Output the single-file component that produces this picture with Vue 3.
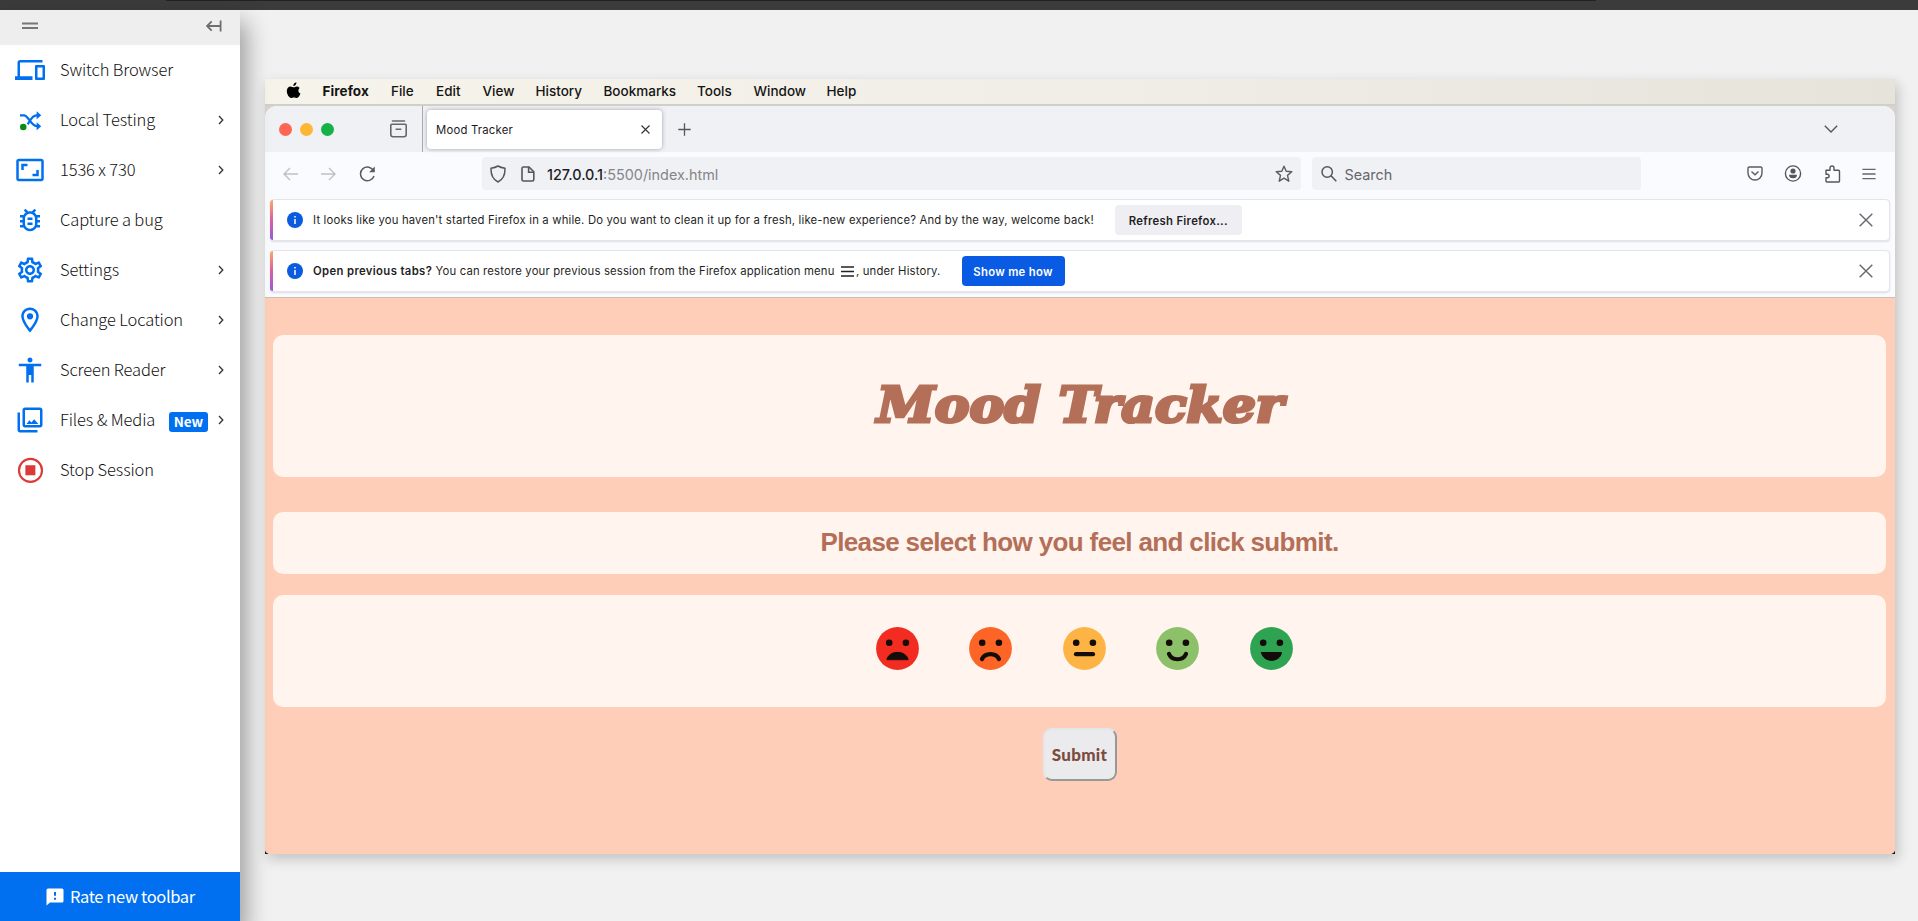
<script setup>
const tools = [
  { label: 'Switch Browser', icon: 'devices', arrow: false },
  { label: 'Local Testing', icon: 'shuffle', arrow: true },
  { label: '1536 x 730', icon: 'ratio', arrow: true },
  { label: 'Capture a bug', icon: 'bug', arrow: false },
  { label: 'Settings', icon: 'gear', arrow: true },
  { label: 'Change Location', icon: 'pin', arrow: true },
  { label: 'Screen Reader', icon: 'person', arrow: true },
  { label: 'Files & Media', icon: 'media', arrow: true, badge: 'New' },
  { label: 'Stop Session', icon: 'stop', arrow: false },
]

const paths = {
  devices: 'M4 6h18V4H4c-1.1 0-2 .9-2 2v11H0v3h14v-3H4V6zm19 2h-6c-.55 0-1 .45-1 1v10c0 .55.45 1 1 1h6c.55 0 1-.45 1-1V9c0-.55-.45-1-1-1zm-1 10h-4v-8h4v8z',
  ratio: 'M19 12h-2v3h-3v2h5v-5zM7 9h3V7H5v5h2V9zm14-6H3c-1.1 0-2 .9-2 2v14c0 1.1.9 2 2 2h18c1.1 0 2-.9 2-2V5c0-1.1-.9-2-2-2zm0 16.01H3V4.99h18v14.02z',
  bug: 'M20 8h-2.81c-.45-.78-1.07-1.45-1.82-1.96L17 4.41 15.59 3l-2.17 2.17C12.96 5.06 12.49 5 12 5s-.96.06-1.41.17L8.41 3 7 4.41l1.62 1.63C7.88 6.55 7.26 7.22 6.81 8H4v2h2.09c-.05.33-.09.66-.09 1v1H4v2h2v1c0 .34.04.67.09 1H4v2h2.81c1.04 1.79 2.97 3 5.19 3s4.15-1.21 5.19-3H20v-2h-2.09c.05-.33.09-.66.09-1v-1h2v-2h-2v-1c0-.34-.04-.67-.09-1H20V8zm-4 4v3c0 2.21-1.79 4-4 4s-4-1.79-4-4v-4c0-2.21 1.79-4 4-4s4 1.79 4 4v1zm-6 2h4v2h-4zm0-4h4v2h-4z',
  gear: 'M19.43 12.98c.04-.32.07-.64.07-.98s-.03-.66-.07-.98l2.11-1.65c.19-.15.24-.42.12-.64l-2-3.46c-.09-.16-.26-.25-.44-.25-.06 0-.12.01-.17.03l-2.49 1c-.52-.4-1.08-.73-1.69-.98l-.38-2.65C14.46 2.18 14.25 2 14 2h-4c-.25 0-.46.18-.49.42l-.38 2.65c-.61.25-1.17.59-1.69.98l-2.49-1c-.06-.02-.12-.03-.18-.03-.17 0-.34.09-.43.25l-2 3.46c-.13.22-.07.49.12.64l2.11 1.65c-.04.32-.07.65-.07.98s.03.66.07.98l-2.11 1.65c-.19.15-.24.42-.12.64l2 3.46c.09.16.26.25.44.25.06 0 .12-.01.17-.03l2.49-1c.52.4 1.08.73 1.69.98l.38 2.65c.03.24.24.42.49.42h4c.25 0 .46-.18.49-.42l.38-2.65c.61-.25 1.17-.59 1.69-.98l2.49 1c.06.02.12.03.18.03.17 0 .34-.09.43-.25l2-3.46c.12-.22.07-.49-.12-.64l-2.11-1.65zm-1.98-1.71c.04.31.05.52.05.73 0 .21-.02.43-.05.73l-.14 1.13.89.7 1.08.84-.7 1.21-1.27-.51-1.04-.42-.9.68c-.43.32-.84.56-1.25.73l-1.06.43-.16 1.13-.2 1.35h-1.4l-.19-1.35-.16-1.13-1.06-.43c-.43-.18-.83-.41-1.23-.71l-.91-.7-1.06.43-1.27.51-.7-1.21 1.08-.84.89-.7-.14-1.13c-.03-.31-.05-.54-.05-.74s.02-.43.05-.73l.14-1.13-.89-.7-1.08-.84.7-1.21 1.27.51 1.04.42.9-.68c.43-.32.84-.56 1.25-.73l1.06-.43.16-1.13.2-1.35h1.39l.19 1.35.16 1.13 1.06.43c.43.18.83.41 1.23.71l.91.7 1.06-.43 1.27-.51.7 1.21-1.07.85-.89.7.14 1.13zM12 8c-2.21 0-4 1.79-4 4s1.79 4 4 4 4-1.79 4-4-1.79-4-4-4zm0 6c-1.1 0-2-.9-2-2s.9-2 2-2 2 .9 2 2-.9 2-2 2z',
  pin: 'M12 2C8.13 2 5 5.13 5 9c0 5.25 7 13 7 13s7-7.75 7-13c0-3.87-3.13-7-7-7zM7 9c0-2.76 2.24-5 5-5s5 2.24 5 5c0 2.88-2.88 7.19-5 9.88C9.92 16.21 7 11.85 7 9zM12 6.5a2.5 2.5 0 1 0 0 5a2.5 2.5 0 1 0 0-5z',
  person: 'M12 2c1.1 0 2 .9 2 2s-.9 2-2 2-2-.9-2-2 .9-2 2-2zm9 7h-6v13h-2v-6h-2v6H9V9H3V7h18v2z',
  media: 'M20 4v12H8V4h12m0-2H8c-1.1 0-2 .9-2 2v12c0 1.1.9 2 2 2h12c1.1 0 2-.9 2-2V4c0-1.1-.9-2-2-2zm-8.5 10.2l1.6 1.8 2.2-2.6 3.4 3.7H9.2zM2 6v14c0 1.1.9 2 2 2h14v-2H4V6H2z',
}

const menus = ['Firefox', 'File', 'Edit', 'View', 'History', 'Bookmarks', 'Tools', 'Window', 'Help']

const moods = [
  { color: '#f22c20', mouth: 'M11 32.3C13 23 30 23 32 32.3Z', fill: true },
  { color: '#fd6526', mouth: 'M13 32C16 25.5 27 25.5 30 32', fill: false },
  { color: '#fdb445', mouth: 'M13 27.2H30', fill: false },
  { color: '#8cc069', mouth: 'M13 27C16 34 27 34 30 27', fill: false },
  { color: '#2ea351', mouth: 'M11.5 25.5H31.5C30 36 13 36 11.5 25.5Z', fill: true },
]
</script>

<template>
  <div class="screen">
    <div class="topbar"><div class="topline"></div></div>
    <div class="main">
      <aside class="sidebar">
        <header class="side-head">
          <svg width="16" height="8" viewBox="0 0 16 8"><path d="M0 1.5H16M0 6H16" stroke="#777" stroke-width="1.9" /></svg>
          <svg width="16" height="12" viewBox="0 0 16 12"><path d="M14.6 .5V11.5M14 6H1.5M5.7 1.3L1 6L5.7 10.7" fill="none" stroke="#6e6e6e" stroke-width="1.8" /></svg>
        </header>
        <nav class="tools">
          <div v-for="t in tools" :key="t.label" class="tool">
            <svg class="tool-icon" width="30" height="30" viewBox="0 0 24 24">
              <g v-if="t.icon === 'shuffle'">
                <path d="M4 8.2H7.2C10.5 8.2 13 16.9 17.2 16.9H18.5M10.2 15.5C12.2 12.2 13.6 8.2 17.2 8.2H18.5" fill="none" stroke="#0070f0" stroke-width="1.8" />
                <path d="M17.3 5L21 8.2L17.3 11.4ZM17.3 13.7L21 16.9L17.3 20.1Z" fill="#0070f0" />
                <circle cx="6.6" cy="17.5" r="2.6" fill="#0a8a14" />
              </g>
              <g v-else-if="t.icon === 'stop'">
                <circle cx="12.4" cy="12.3" r="9.2" fill="none" stroke="#dc3939" stroke-width="1.7" />
                <rect x="8.3" y="8.2" width="8" height="8" fill="#dc3939" />
              </g>
              <path v-else :d="paths[t.icon]" fill="#0070f0" />
            </svg>
            <span class="tool-label">{{ t.label }}</span>
            <span v-if="t.badge" class="badge">{{ t.badge }}</span>
            <svg v-if="t.arrow" class="tool-arrow" width="6" height="10" viewBox="0 0 6 10"><path d="M1 1L4.8 5L1 9" fill="none" stroke="#333" stroke-width="1.3" /></svg>
          </div>
        </nav>
        <footer class="rate">
          <svg width="18" height="18" viewBox="0 0 18 18"><path d="M2 .5H16Q17.5 .5 17.5 2V13Q17.5 14.5 16 14.5H4L.5 17.5V2Q.5 .5 2 .5Z" fill="#fff" /><path d="M9 4V7.8M9 9.7V11.7" stroke="#0070f0" stroke-width="2" /></svg>
          <span>Rate new toolbar</span>
        </footer>
      </aside>

      <main class="stage">
        <section class="vm">
          <div class="menubar">
            <svg class="apple" width="15" height="17" viewBox="0 0 15 17"><path d="M10.4 .2C10.6 2.2 9 4 7.3 4C7.1 2.1 8.7 .5 10.4 .2ZM13.7 6C12 7.1 11.8 10.3 14.4 11.5C13.8 13.2 12.4 16 10.8 16C9.7 16 9.3 15.4 8 15.4C6.7 15.4 6.2 16 5.2 16C3 16 .8 12 .8 9C.8 6.2 2.5 4.4 4.6 4.4C5.8 4.4 6.9 5.2 7.7 5.2C8.5 5.2 9.6 4.3 11.1 4.4C12 4.4 13.1 4.9 13.7 6Z" fill="#000" /></svg>
            <span v-for="m in menus" :key="m" class="menu" :class="{ strong: m === 'Firefox' }">{{ m }}</span>
          </div>
          <div class="window">
            <div class="tabstrip">
              <div class="lights"><i class="red"></i><i class="amber"></i><i class="green"></i></div>
              <svg class="archive" width="17" height="18" viewBox="0 0 17 18"><path d="M2.5 1H14.5M1.8 4.3H15.2Q16.2 4.3 16.2 5.3V14.5Q16.2 16.7 14 16.7H3Q.8 16.7 .8 14.5V5.3Q.8 4.3 1.8 4.3ZM6.2 9.3H10.8" fill="none" stroke="#66666e" stroke-width="1.6" stroke-linecap="round" /></svg>
              <div class="divider"></div>
              <div class="tab">
                <span>Mood Tracker</span>
                <svg width="9" height="9" viewBox="0 0 9 9"><path d="M.5 .5L8.5 8.5M8.5 .5L.5 8.5" stroke="#333" stroke-width="1.1" /></svg>
              </div>
              <svg class="plus" width="13" height="13" viewBox="0 0 13 13"><path d="M6.5 .3V12.7M.3 6.5H12.7" stroke="#55555c" stroke-width="1.3" /></svg>
              <svg class="tabs-more" width="14" height="8" viewBox="0 0 14 8"><path d="M.8 .8L7 7L13.2 .8" fill="none" stroke="#55555c" stroke-width="1.4" /></svg>
            </div>
            <div class="navbar">
              <div class="navbuttons">
                <svg width="15" height="14" viewBox="0 0 15 14"><path d="M15 7H1M7 1L1 7L7 13" fill="none" stroke="#bfbfc4" stroke-width="1.4" /></svg>
                <svg width="15" height="14" viewBox="0 0 15 14"><path d="M0 7H14M8 1L14 7L8 13" fill="none" stroke="#bfbfc4" stroke-width="1.4" /></svg>
                <svg width="17" height="16" viewBox="0 0 17 16"><path d="M14.7 5A6.9 6.9 0 1 0 15 10" fill="none" stroke="#5b5b62" stroke-width="1.5" /><path d="M15.8 .6V6.3H10.1Z" fill="#5b5b62" /></svg>
              </div>
              <div class="urlbar">
                <svg width="16" height="18" viewBox="0 0 16 18"><path d="M8 1C10 2.3 12.4 2.9 15 3.2C15.2 9.6 13 14.6 8 17C3 14.6 .8 9.6 1 3.2C3.6 2.9 6 2.3 8 1Z" fill="none" stroke="#55555c" stroke-width="1.5" stroke-linejoin="round" /></svg>
                <svg class="doc" width="14" height="16" viewBox="0 0 14 16"><path d="M2.5 1H8L12.8 5.8V13.5Q12.8 15 11.3 15H2.5Q1 15 1 13.5V2.5Q1 1 2.5 1Z" fill="none" stroke="#55555c" stroke-width="1.6" /><path d="M7.6 1V6.3H13" fill="none" stroke="#55555c" stroke-width="1.6" /></svg>
                <span class="url"><b>127.0.0.1</b>:5500/index.html</span>
                <svg class="star" width="18" height="18" viewBox="0 0 18 18"><path d="M9 1.2L11.2 6.3L16.8 6.8L12.5 10.4L13.8 16.2L9 13.1L4.2 16.2L5.5 10.4L1.2 6.8L6.8 6.3Z" fill="none" stroke="#5b5b62" stroke-width="1.4" stroke-linejoin="round" /></svg>
              </div>
              <div class="searchbar">
                <svg width="16" height="16" viewBox="0 0 16 16"><circle cx="6.2" cy="6" r="5.2" fill="none" stroke="#55555c" stroke-width="1.5" /><path d="M10 9.8L15.3 15.2" stroke="#55555c" stroke-width="1.6" /></svg>
                <span>Search</span>
              </div>
              <div class="actions">
                <svg width="16" height="15" viewBox="0 0 16 15"><path d="M2.3 1H13.7Q15 1 15 2.3V7A7 7 0 0 1 1 7V2.3Q1 1 2.3 1ZM4.5 5.5L8 8.8L11.5 5.5" fill="none" stroke="#5b5b62" stroke-width="1.4" /></svg>
                <svg width="18" height="17" viewBox="0 0 18 17"><circle cx="9" cy="8.5" r="7.6" fill="none" stroke="#55555c" stroke-width="1.4" /><circle cx="9" cy="6" r="2.6" fill="#55555c" /><path d="M5 9.8H13Q13 13.3 9 13.3Q5 13.3 5 9.8Z" fill="#55555c" /></svg>
                <svg width="17" height="18" viewBox="0 0 17 18"><path d="M2 5.2H6V3A2 2 0 0 1 10 3V5.2H14.5Q15.5 5.2 15.5 6.2V16Q15.5 17 14.5 17H3Q2 17 2 16V12.8H3.3A1.8 1.8 0 0 0 3.3 9.2H2Z" fill="none" stroke="#55555c" stroke-width="1.4" stroke-linejoin="round" /></svg>
                <svg width="14" height="12" viewBox="0 0 14 12"><path d="M.4 1.3H13.6M.4 6H13.6M.4 10.7H13.6" stroke="#66666d" stroke-width="1.3" /></svg>
              </div>
            </div>
            <div class="notices">
              <div class="notice">
                <svg class="info" width="16" height="16" viewBox="0 0 16 16"><circle cx="8" cy="8" r="8" fill="#0a5be0" /><path d="M8 7V12M8 4V5.6" stroke="#fff" stroke-width="1.5" /></svg>
                <span class="notice-text">It looks like you haven't started Firefox in a while. Do you want to clean it up for a fresh, like-new experience? And by the way, welcome back!</span>
                <button class="btn refresh">Refresh Firefox...</button>
                <svg class="dismiss" width="14" height="14" viewBox="0 0 14 14"><path d="M.7 .7L13.3 13.3M13.3 .7L.7 13.3" stroke="#66666d" stroke-width="1.4" /></svg>
              </div>
              <div class="notice">
                <svg class="info" width="16" height="16" viewBox="0 0 16 16"><circle cx="8" cy="8" r="8" fill="#0a5be0" /><path d="M8 7V12M8 4V5.6" stroke="#fff" stroke-width="1.5" /></svg>
                <span class="notice-text"><b>Open previous tabs?</b> You can restore your previous session from the Firefox application menu <svg class="burger" width="13" height="11" viewBox="0 0 13 11"><path d="M0 1H13M0 5.5H13M0 10H13" stroke="#222" stroke-width="1.3" /></svg>, under History.</span>
                <button class="btn show">Show me how</button>
                <svg class="dismiss" width="14" height="14" viewBox="0 0 14 14"><path d="M.7 .7L13.3 13.3M13.3 .7L.7 13.3" stroke="#66666d" stroke-width="1.4" /></svg>
              </div>
            </div>
            <div class="page">
              <div class="card title-card"><h1>Mood Tracker</h1></div>
              <div class="card prompt-card"><h2>Please select how you feel and click submit.</h2></div>
              <div class="card mood-card">
                <svg v-for="m in moods" :key="m.color" width="43" height="43" viewBox="0 0 43 43">
                  <circle cx="21.5" cy="21.5" r="21.4" :fill="m.color" />
                  <circle cx="13.2" cy="15.8" r="3.3" fill="#140c08" />
                  <circle cx="29.9" cy="15.8" r="3.3" fill="#140c08" />
                  <path :d="m.mouth" :fill="m.fill ? '#140c08' : 'none'" stroke="#140c08" :stroke-width="m.fill ? 1 : 4.2" stroke-linecap="round" stroke-linejoin="round" />
                </svg>
              </div>
              <button class="submit">Submit</button>
            </div>
          </div>
        </section>
      </main>
    </div>
  </div>
</template>

<style>
body { overflow: hidden; }
</style>

<style scoped>
* { box-sizing: border-box; }
svg { display: block; flex: none; }
span, h1, h2, button { white-space: nowrap; }
.screen { width: 1918px; height: 921px; overflow: hidden; background: #f1f1f1; display: flex; flex-direction: column; }
.topbar { height: 10px; flex: none; background: #3b3b3b; }
.topline { height: 1px; width: 1430px; margin-left: 166px; background: #222; }
.main { flex: 1; display: flex; min-height: 0; }

.sidebar { position: relative; z-index: 2; width: 240px; flex: none; background: #fff; display: flex; flex-direction: column; box-shadow: 4px 14px 22px 2px rgba(0, 0, 0, .36); font-family: "Noto Sans CJK SC", "Noto Sans", sans-serif; font-weight: 300; color: #111; }
.side-head { height: 35px; background: #eee; display: flex; align-items: center; justify-content: space-between; padding: 0 18px 3px 22px; }
.tools { flex: 1; }
.tool { height: 50px; display: flex; align-items: center; padding: 0 16px 0 15px; }
.tool-label { margin: -3px 0 0 15px; font-size: 16.5px; line-height: 24px; letter-spacing: -.12px; }
.tool-arrow { margin-left: auto; }
.badge { margin: 4px 0 0 auto; width: 39px; height: 20px; border-radius: 3px; background: #0070f0; color: #fff; font: bold 13.5px/19px "Noto Sans CJK SC", "Noto Sans", sans-serif; text-align: center; }
.badge + .tool-arrow { margin-left: 10px; }
.rate { height: 49px; background: #0070f0; color: #fff; display: flex; align-items: center; gap: 6px; padding-left: 46px; font-size: 16.5px; font-weight: 400; letter-spacing: -.38px; }
.rate span { margin-top: -1px; }

.stage { flex: 1; padding: 69px 0 0 25px; }
.vm { width: 1630px; height: 775px; background: linear-gradient(#d6d4cc, #d6d4cc 60%, #201410 90%); box-shadow: 3px 5px 12px rgba(0, 0, 0, .2); font-family: Inter, sans-serif; display: flex; flex-direction: column; }
.menubar { height: 27px; flex: none; background: linear-gradient(90deg, #f5f3ea, #f1eee7 50%, #e5e3da); border-bottom: 2px solid #cfd0cb; display: grid; grid-template-columns: 36.5px 68.5px 45px 46.5px 53px 68px 93.5px 56.5px 73px 60px; padding: 0 0 2px 21px; align-items: center; color: #141414; }
.menu { font-size: 13.5px; font-weight: 500; line-height: 20px; }
.menu.strong { font-weight: 700; letter-spacing: .1px; }
.window { flex: 1; display: flex; flex-direction: column; border-radius: 12px 12px 5px 5px; overflow: hidden; background: #fafbfe; }
.tabstrip { height: 46px; flex: none; background: #f0f1f4; display: flex; align-items: center; }
.lights { display: flex; gap: 8px; margin-left: 13.5px; width: 111.5px; }
.lights i { width: 13px; height: 13px; border-radius: 50%; }
.red { background: #fe6553; }
.amber { background: #fdb734; }
.green { background: #15b247; }
.divider { width: 1px; height: 46px; margin-left: 15px; background: #a9a9ae; }
.tab { width: 235px; height: 39px; margin-left: 4px; border-radius: 4px; background: #fff; box-shadow: 0 0 4px rgba(100, 110, 125, .6); display: flex; align-items: center; justify-content: space-between; padding: 0 12.5px 0 9px; font-size: 11.3px; letter-spacing: .22px; color: #1b1b1f; }
.tab span { margin-top: 2px; }
.plus { margin-left: 16px; }
.tabs-more { margin-left: auto; margin-right: 57px; }
.navbar { height: 47px; flex: none; display: flex; padding-top: 5px; }
.navbuttons { width: 217px; height: 33px; display: flex; align-items: center; gap: 23px; padding-left: 18px; }
.urlbar, .searchbar { height: 33px; background: #f0f1f4; border-radius: 4px; display: flex; align-items: center; font-size: 14.4px; color: #85858b; }
.urlbar { width: 818.5px; padding: 0 8px; }
.doc { margin-left: 15px; }
.url { margin-left: 12px; padding-top: 2px; }
.url b { font-weight: 500; color: #1e1e24; }
.star { margin-left: auto; }
.searchbar { width: 329px; margin-left: 11px; padding-left: 9px; gap: 8px; color: #66666d; }
.searchbar span { padding-top: 2px; }
.actions { flex: 1; height: 33px; display: flex; align-items: center; justify-content: flex-end; gap: 21.5px; padding-right: 19px; }
.notices { height: 99px; flex: none; display: flex; flex-direction: column; gap: 9px; padding: 0 5px; border-bottom: 1px solid #cbbeb9; }
.notice { position: relative; height: 42px; flex: none; background: #fff; border: 1px solid #e6e3e9; border-radius: 4px; box-shadow: 0 1px 2px rgba(50, 50, 90, .14); display: flex; align-items: center; padding: 0 16px; color: #1f1f25; }
.notice::before { content: ""; position: absolute; left: -1px; top: 0; bottom: 0; width: 3px; background: linear-gradient(#f6ad68, #dd5f9d 50%, #925fd8); border-radius: 3px 0 0 3px; }
.notice-text { margin: 0 0 0 10px; font-size: 11.3px; line-height: 18px; letter-spacing: .18px; }
.notice-text b { font-weight: 600; letter-spacing: .36px; }
.burger { display: inline-block; vertical-align: -2px; margin: 0 2px 0 3px; }
.btn { height: 30px; border: 0; border-radius: 4px; font: 600 11.3px Inter, sans-serif; letter-spacing: .3px; padding: 1px 0 0; flex: none; }
.refresh { width: 127px; margin-left: 21px; background: #efeff3; color: #1f1f25; }
.show { width: 103px; margin-left: 21px; background: #095be3; color: #fff; }
.dismiss { margin-left: auto; }
.page { flex: 1; background: #ffceb9; padding: 37px 9px 0 8px; display: flex; flex-direction: column; }
.card { background: #fff4ee; border-radius: 10px; display: flex; align-items: center; justify-content: center; color: #b46f58; flex: none; }
.title-card { height: 142px; padding: 0 0 3px 2px; }
h1 { margin: 0; font: italic bold 48px/60px "DejaVu Serif", serif; -webkit-text-stroke: 3.2px #b46f58; transform: scaleX(1.085); }
.prompt-card { height: 61.5px; margin-top: 35px; padding-bottom: 1px; }
h2 { margin: 0; font: bold 26px/34px "Liberation Sans", sans-serif; letter-spacing: -.64px; }
.mood-card { height: 112px; margin-top: 21.5px; gap: 50.5px; padding: 0 0 6px 9px; }
.submit { width: 74px; height: 53px; margin-top: 21px; align-self: center; border: 2px solid; border-color: #e4e6e9 #97989c #97989c #e4e6e9; border-radius: 9px; background: #ebebee; color: #7b4d3e; font: 900 17px Lato, sans-serif; letter-spacing: .3px; padding: 0 0 1px; flex: none; }
</style>
